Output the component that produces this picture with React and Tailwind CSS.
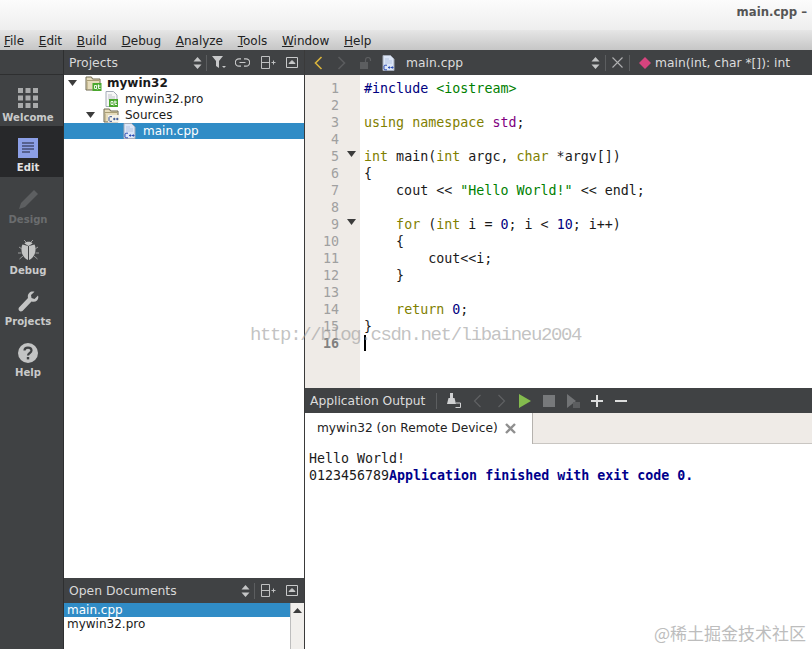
import React from "react";

const Sep = () => <div className="w-px h-[16px] bg-[#5c5e60]" />;

const UpDown = () => (
  <svg width="9" height="14" viewBox="0 0 9 14" className="shrink-0">
    <path d="M4.5 1 L8.5 5.5 H0.5 Z M4.5 13 L0.5 8.5 H8.5 Z" fill="#c4c5c6" />
  </svg>
);

const SplitIcon = () => (
  <svg width="16" height="13" viewBox="0 0 16 13" fill="none" stroke="#bfc0c1" strokeWidth="1">
    <path d="M1.5 .5H9.5V12.5H1.5ZM1.5 6.5H9.5M11.5 6.5H15.5M13.5 4.5V8.5" />
  </svg>
);

const CloseDock = () => (
  <svg width="12" height="11" viewBox="0 0 12 11" fill="none" stroke="#c8c9ca" strokeWidth="1">
    <path d="M.5 .5H11.5V10.5H.5Z" />
    <path d="M3 6.5L6 3.5L9 6.5Z" fill="#c8c9ca" />
  </svg>
);

const FilterIcon = () => (
  <svg width="14" height="13" viewBox="0 0 14 13">
    <path d="M0 0H11L7 5V12L4 10V5Z" fill="#c8c9ca" />
    <path d="M10 10H14L12 12Z" fill="#c8c9ca" />
  </svg>
);

const LinkIcon = () => (
  <svg width="15" height="9" viewBox="0 0 15 9" fill="none" stroke="#c8c9ca" strokeWidth="1.2">
    <path d="M6 .8H4A3.6 3.6 0 0 0 4 8.2H6M9 .8H11A3.6 3.6 0 0 1 11 8.2H9M4.5 4.5H10.5" />
  </svg>
);

const Tri = ({ color = "#3c3c3c", className = "" }) => (
  <svg width="9" height="6" viewBox="0 0 9 6" className={className}>
    <path d="M0 0H9L4.5 6Z" fill={color} />
  </svg>
);

const QtBadge = ({ x, y }) => (
  <g transform={`translate(${x} ${y})`}>
    <rect x="0" y="0" width="9" height="8" fill="#4aa82e" />
    <path d="M2 2.5H4V5.5H2ZM4 5.5L4.8 6.5M6 1.5V5.5H8M5 3H8" stroke="#fff" strokeWidth="0.9" fill="none" />
  </g>
);

const CppBadge = ({ x, y, color = "#2e4fb5" }) => (
  <g transform={`translate(${x} ${y})`}>
    <path d="M3.5 .7H1.2L.5 1.5V4.5L1.2 5.3H3.5M4.5 3H7M5.8 1.8V4.2M7.5 3H10M8.8 1.8V4.2" stroke={color} strokeWidth="1" fill="none" />
  </g>
);

const Folder = ({ badge }) => (
  <svg width="17" height="15" viewBox="0 0 17 15" className="shrink-0">
    <path d="M1 1H6.5L7.5 3H15V14H1Z" fill="#e6dcbc" stroke="#6f684f" />
    <path d="M2 4.5H14" stroke="#a99d74" />
    <path d="M2 5.5V13H3V5.5Z" fill="#c9bd94" />
    {badge === "qt" ? (
      <QtBadge x={7.5} y={7} />
    ) : (
      <g>
        <rect x="5" y="7" width="11.5" height="7.5" fill="#f4f2ea" />
        <CppBadge x={5.5} y={8} color="#34508f" />
      </g>
    )}
  </svg>
);

const FileIc = ({ badge }) => (
  <svg width="13" height="16" viewBox="0 0 13 16" className="shrink-0">
    <path d="M1 .5H8.5L12 4V15.5H1Z" fill={badge === "qt" ? "#f7f7f7" : "#dce6f7"} stroke="#a4abb8" />
    <path d="M3 4H7M3 6H10M3 8H10" stroke={badge === "qt" ? "#bfc3ca" : "#b6c5e2"} />
    {badge === "qt" ? <QtBadge x={4} y={8} /> : <CppBadge x={1.5} y={9.5} />}
  </svg>
);

const Nav = ({ label, icon, active, dim }) => (
  <div className={`flex flex-col items-center pr-[7px] ${active ? "bg-[#27282a] -mt-[2px] pt-[2px] h-[51px] mb-[2px]" : "h-[51px]"}`}>
    <div className="h-[31px] flex items-end justify-center">{icon}</div>
    <span className={`text-[10.1px] font-bold leading-[18px] mt-[1px] ${dim ? "text-[#6a6c6e]" : active ? "text-[#e2e2e2]" : "text-[#c9caca]"}`}>{label}</span>
  </div>
);

const welcomeIcon = (
  <svg width="20" height="20" viewBox="0 0 20 20" fill="#a9aaab">
    <rect x="0" y="0" width="5" height="5" /><rect x="7.5" y="0" width="5" height="5" /><rect x="15" y="0" width="5" height="5" />
    <rect x="0" y="7.5" width="5" height="5" /><rect x="7.5" y="7.5" width="5" height="5" /><rect x="15" y="7.5" width="5" height="5" />
    <rect x="0" y="15" width="5" height="5" /><rect x="7.5" y="15" width="5" height="5" /><rect x="15" y="15" width="5" height="5" />
  </svg>
);
const editIcon = (
  <svg width="20" height="20" viewBox="0 0 20 20">
    <rect width="20" height="20" fill="#8c9fe6" />
    <path d="M4 5H16M4 8H16M4 11H16M4 14H12" stroke="#20243a" strokeWidth="1.2" />
  </svg>
);
const designIcon = (
  <svg width="21" height="21" viewBox="0 0 21 21">
    <path d="M16 1L20 5L7 18L1 20L3 14Z" fill="#5d5f61" />
  </svg>
);
const debugIcon = (
  <svg width="21" height="22" viewBox="0 0 21 22">
    <path d="M6.5 4.5C7 2 14 2 14.5 4.5L10.5 7Z" fill="#c3c4c4" />
    <path d="M10 7L4.5 5.5C2.5 9 3 18 10 21ZM11 7L16.5 5.5C18.5 9 18 18 11 21Z" fill="#c3c4c4" />
    <path d="M1 8L4 10M0 14H3.5M1.5 20L5 17M20 8L17 10M21 14H17.5M19.5 20L16 17M6 1L8 3M15 1L13 3" stroke="#9b9c9d" strokeWidth="1" />
  </svg>
);
const wrenchIcon = (
  <svg width="21" height="21" viewBox="0 0 21 21">
    <path d="M20 4.5L16.5 8L13.5 7L13 4L16.5 .7C12.5 -.5 9 2.5 10 7L1 16.5C-.5 19 2 21.5 4.5 20L13.5 10.5C18 12 21.5 8.5 20 4.5Z" fill="#c3c4c4" />
  </svg>
);
const helpIcon = (
  <svg width="20" height="20" viewBox="0 0 20 20">
    <circle cx="10" cy="10" r="10" fill="#c3c4c4" />
    <path d="M6.5 7.5C6.5 3.7 13.5 3.7 13.5 7.5C13.5 10 10 10 10 12.5" stroke="#3f4143" strokeWidth="2.2" fill="none" />
    <rect x="8.8" y="14" width="2.4" height="2.4" fill="#3f4143" />
  </svg>
);

const K = ({ children }) => <span className="text-[#808000]">{children}</span>;
const B = ({ children }) => <span className="text-[#000080]">{children}</span>;
const G = ({ children }) => <span className="text-[#008000]">{children}</span>;
const P = ({ children }) => <span className="text-[#800080]">{children}</span>;

const code = [
  <><B>#include</B> <G>&lt;iostream&gt;</G></>,
  "",
  <><K>using</K> <K>namespace</K> <P>std</P>;</>,
  "",
  <><K>int</K> main(<K>int</K> argc, <K>char</K> *argv[])</>,
  "{",
  <>    cout &lt;&lt; <G>"Hello World!"</G> &lt;&lt; endl;</>,
  "",
  <>    <K>for</K> (<K>int</K> i = <B>0</B>; i &lt; <B>10</B>; i++)</>,
  "    {",
  "        cout<<i;",
  "    }",
  "",
  <>    <K>return</K> <B>0</B>;</>,
  "}",
  "",
];

const folds = [4, 8];

const Cell = ({ children }) => <div className="w-[24px] flex justify-center items-center">{children}</div>;

export default function App() {
  const ui = { fontFamily: '"DejaVu Sans", sans-serif' };
  const mono = { fontFamily: '"DejaVu Sans Mono", monospace' };
  return (
    <div className="relative w-[812px] h-[649px] overflow-hidden flex flex-col bg-white" style={ui}>
      {/* Title bar */}
      <div className="h-[30px] shrink-0 bg-gradient-to-b from-[#fcfcfc] to-[#eeeeee] flex justify-end overflow-hidden pt-[4px]">
        <span className="text-[11.7px] leading-[16px] font-bold text-[#555555] whitespace-nowrap pr-[5px]">main.cpp –</span>
      </div>
      {/* Menu bar */}
      <div className="h-[20px] shrink-0 bg-gradient-to-b from-[#e6e6e6] to-[#c6c6c6] flex items-center pl-[4px] pt-[1px] gap-[14.7px] text-[12px] text-[#222222]">
        {["File", "Edit", "Build", "Debug", "Analyze", "Tools", "Window", "Help"].map((m) => (
          <span key={m}><span className="underline">{m[0]}</span>{m.slice(1)}</span>
        ))}
      </div>
      {/* Body */}
      <div className="flex-1 flex min-h-0">
        {/* Sidebar */}
        <div className="w-[64px] shrink-0 bg-[#404244] border-r border-[#2e2f30] flex flex-col">
          <div className="h-[25px] border-b border-[#2e2f30]" />
          <div className="h-[2px]" />
          <Nav label="Welcome" icon={welcomeIcon} />
          <Nav label="Edit" icon={editIcon} active />
          <Nav label="Design" icon={designIcon} dim />
          <Nav label="Debug" icon={debugIcon} />
          <Nav label="Projects" icon={wrenchIcon} />
          <Nav label="Help" icon={helpIcon} />
        </div>
        {/* Left panels */}
        <div className="w-[241px] shrink-0 flex flex-col border-r border-[#3a3a3a]">
          <div className="h-[25px] shrink-0 bg-[#404244] flex items-center pl-[5px] text-[12.4px] text-[#d8d8d8]">
            <span className="flex-1 pt-[1px]">Projects</span>
            <UpDown />
            <div className="ml-[4px] mr-[5px]"><Sep /></div>
            <FilterIcon />
            <div className="ml-[9px]"><LinkIcon /></div>
            <div className="ml-[10px]"><SplitIcon /></div>
            <div className="ml-[10px] mr-[6px]"><CloseDock /></div>
          </div>
          <div className="flex-1 bg-white text-[12px] text-[#1a1a1a] leading-[16px]">
            <div className="h-[16px] flex items-center">
              <Tri className="ml-[4px]" />
              <div className="ml-[8px]"><Folder badge="qt" /></div>
              <span className="ml-[5px] font-bold">mywin32</span>
            </div>
            <div className="h-[16px] flex items-center pl-[41px]">
              <FileIc badge="qt" />
              <span className="ml-[7px]">mywin32.pro</span>
            </div>
            <div className="h-[16px] flex items-center">
              <Tri className="ml-[22px]" />
              <div className="ml-[8px]"><Folder /></div>
              <span className="ml-[5px]">Sources</span>
            </div>
            <div className="h-[16px] flex items-center pl-[59px] bg-[#308cc6] text-white">
              <FileIc />
              <span className="ml-[7px]">main.cpp</span>
            </div>
          </div>
          <div className="h-[25px] shrink-0 bg-[#404244] flex items-center pl-[5px] text-[12.4px] text-[#d8d8d8]">
            <span className="flex-1 pt-[1px]">Open Documents</span>
            <UpDown />
            <div className="ml-[4px] mr-[5px]"><Sep /></div>
            <SplitIcon />
            <div className="ml-[10px] mr-[6px]"><CloseDock /></div>
          </div>
          <div className="h-[46px] shrink-0 flex bg-white text-[12px] leading-[14px] text-[#1a1a1a]">
            <div className="flex-1">
              <div className="h-[14px] bg-[#308cc6] text-white pl-[3px]">main.cpp</div>
              <div className="h-[14px] pl-[3px]">mywin32.pro</div>
            </div>
            <div className="w-[14px] bg-[#f1efec] border-l border-[#bdbdbd] flex justify-center pt-[5px]">
              <svg width="9" height="5" viewBox="0 0 9 5"><path d="M4.5 0L9 5H0Z" fill="#3c3c3c" /></svg>
            </div>
          </div>
        </div>
        {/* Editor column */}
        <div className="flex-1 min-w-0 flex flex-col">
          <div className="h-[25px] shrink-0 bg-[#404244] flex items-center text-[12.3px] text-[#dcdcdc] whitespace-nowrap overflow-hidden">
            <svg width="9" height="14" viewBox="0 0 9 14" className="ml-[9px]" fill="none" stroke="#d9b43c" strokeWidth="1.6"><path d="M7.5 1L1.5 7L7.5 13" /></svg>
            <svg width="9" height="14" viewBox="0 0 9 14" className="ml-[14px]" fill="none" stroke="#5a5c5e" strokeWidth="1.6"><path d="M1.5 1L7.5 7L1.5 13" /></svg>
            <svg width="12" height="12" viewBox="0 0 12 12" className="ml-[14px]">
              <rect x="0" y="5" width="8" height="7" fill="#5c5e60" />
              <path d="M5.5 5V3A2.5 2.5 0 0 1 10.5 3V4" stroke="#5c5e60" strokeWidth="1.2" fill="none" />
            </svg>
            <div className="ml-[10px]"><FileIc /></div>
            <span className="ml-[11px] w-[185px] pt-[1px]">main.cpp</span>
            <UpDown />
            <div className="ml-[5px] mr-[6px]"><Sep /></div>
            <svg width="11" height="11" viewBox="0 0 11 11" stroke="#b0b1b2" strokeWidth="1.1"><path d="M.5 .5L10.5 10.5M10.5 .5L.5 10.5" /></svg>
            <div className="ml-[6px] mr-[9px]"><Sep /></div>
            <svg width="12" height="12" viewBox="0 0 12 12"><path d="M6 0L12 6L6 12L0 6Z" fill="#d6447e" /></svg>
            <span className="ml-[4px] pt-[1px]">main(int, char *[]): int</span>
          </div>
          {/* Code */}
          <div className="flex-1 min-h-0 flex bg-white">
            <div className="w-[55px] shrink-0 bg-[#efebe7] pt-[5px] text-[13.33px] leading-[17px] text-[#a0a0a0]" style={mono}>
              {code.map((_, i) => (
                <div key={i} className="h-[17px] relative pr-[21px] text-right">
                  <span className={i === 15 ? "font-bold text-[#808080]" : ""}>{i + 1}</span>
                  {folds.includes(i) && (
                    <svg width="9" height="6" viewBox="0 0 9 6" className="absolute left-[42px] top-[3px]"><path d="M0 0H9L4.5 6Z" fill="#3c3c3c" /></svg>
                  )}
                </div>
              ))}
            </div>
            <div className="flex-1 pt-[5px] pl-[4px] text-[13.33px] leading-[17px] text-[#1a1a1a] whitespace-pre relative" style={mono}>
              {code.map((line, i) => (
                <div key={i} className="h-[17px]">{line}</div>
              ))}
              <div className="absolute left-[4px] top-[260px] w-[2px] h-[16px] bg-black" />
            </div>
          </div>
          {/* Output */}
          <div className="h-[25px] shrink-0 bg-[#404244] flex items-center text-[12.3px] text-[#dcdcdc]">
            <span className="ml-[5px] w-[126px] pt-[1px]">Application Output</span>
            <Sep />
            <div className="ml-[4px] flex">
              <Cell>
                <svg width="16" height="15" viewBox="0 0 16 15">
                  <rect x="5" y="0" width="3" height="5" fill="#d0d1d2" />
                  <path d="M3.5 5H9.5L11 11H2Z" fill="#d0d1d2" />
                  <path d="M11 10H15.5V14.5H10.5" stroke="#d0d1d2" fill="none" />
                </svg>
              </Cell>
              <Cell><svg width="9" height="14" viewBox="0 0 9 14" fill="none" stroke="#5f6163" strokeWidth="1.2"><path d="M7.5 1L1.5 7L7.5 13" /></svg></Cell>
              <Cell><svg width="9" height="14" viewBox="0 0 9 14" fill="none" stroke="#5f6163" strokeWidth="1.2"><path d="M1.5 1L7.5 7L1.5 13" /></svg></Cell>
              <Cell><svg width="12" height="14" viewBox="0 0 12 14"><path d="M0 0L12 7L0 14Z" fill="#84bb4e" /></svg></Cell>
              <Cell><svg width="12" height="12" viewBox="0 0 12 12"><rect width="12" height="12" fill="#77797b" /></svg></Cell>
              <Cell><svg width="13" height="14" viewBox="0 0 13 14"><path d="M0 0L9 7L0 14Z" fill="#717375" /><rect x="6" y="8" width="7" height="6" fill="#5c5e60" /></svg></Cell>
              <Cell><svg width="12" height="12" viewBox="0 0 12 12" stroke="#dcdddd" strokeWidth="2"><path d="M0 6H12M6 0V12" /></svg></Cell>
              <Cell><svg width="12" height="12" viewBox="0 0 12 12" stroke="#dcdddd" strokeWidth="2"><path d="M0 6H12" /></svg></Cell>
            </div>
          </div>
          <div className="h-[31px] shrink-0 flex bg-[#efebe7]">
            <div className="w-[228px] bg-white border-r border-[#b5b2ae] flex items-center pl-[12px] text-[12.2px] text-[#222222]">
              <span className="whitespace-nowrap">mywin32 (on Remote Device)</span>
              <svg width="11" height="11" viewBox="0 0 11 11" className="ml-[7px]" stroke="#8f8f8f" strokeWidth="2.4"><path d="M1 1L10 10M10 1L1 10" /></svg>
            </div>
            <div className="flex-1 border-b border-[#c9c6c2]" />
          </div>
          <div className="h-[205px] bg-white pt-[6px] pl-[4px] text-[13.3px] leading-[17px] text-[#1a1a1a] whitespace-pre" style={mono}>
            <div>Hello World!</div>
            <div>0123456789<span className="font-bold text-[#00008b]">Application finished with exit code 0.</span></div>
          </div>
        </div>
      </div>
      {/* Watermarks */}
      <div className="absolute left-[250px] top-[324px] text-[19px] leading-[22px] tracking-[-1.37px] text-[#9a9a9a]/60 whitespace-nowrap" style={{ fontFamily: '"Liberation Mono", monospace' }}>
        http://blog.csdn.net/libaineu2004
      </div>
      <div className="absolute left-[654px] top-[623px] text-[17px] leading-[20px] text-[#bdbdbd] whitespace-nowrap" style={{ fontFamily: '"Noto Sans CJK SC", sans-serif' }}>
        @稀土掘金技术社区
      </div>
    </div>
  );
}
